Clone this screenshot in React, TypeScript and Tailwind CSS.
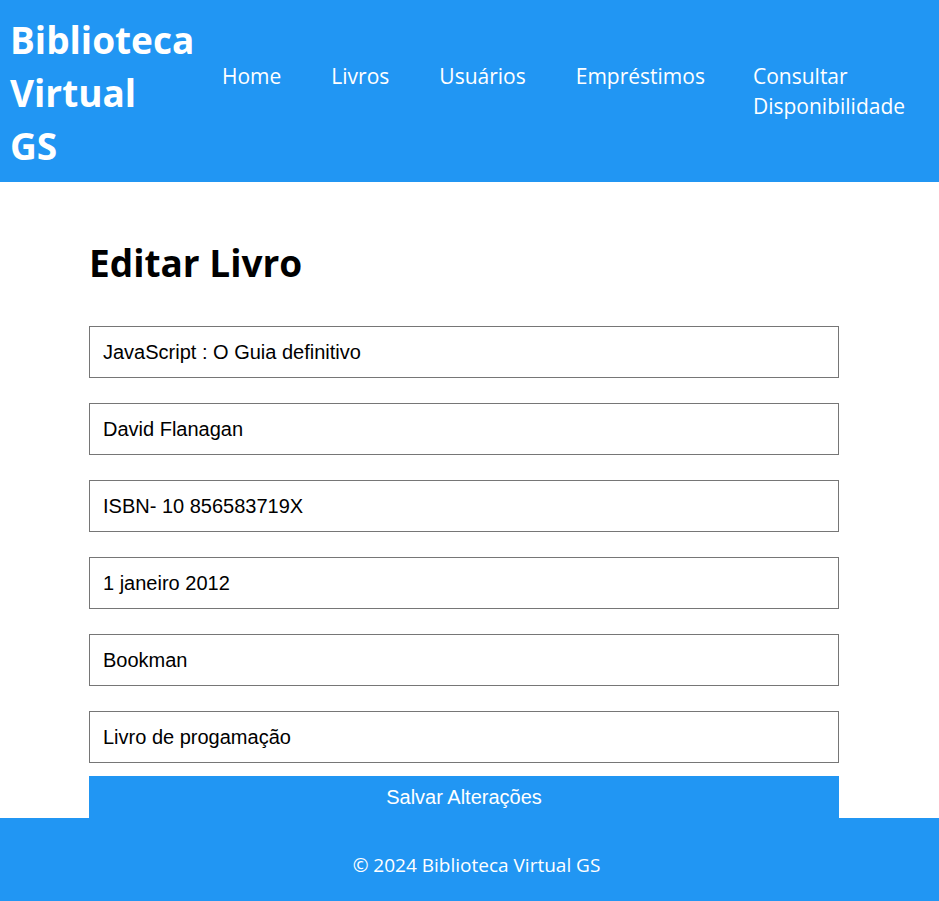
export default function App() {
  const fields = [
    "JavaScript : O Guia definitivo",
    "David Flanagan",
    "ISBN- 10 856583719X",
    "1 janeiro 2012",
    "Bookman",
    "Livro de progamação",
  ];

  const links = ["Home", "Livros", "Usuários", "Empréstimos"];

  return (
    <div className="min-h-[901px] flex flex-col bg-white font-['Open_Sans',sans-serif]">
      <header className="bg-[#2196f3] text-white flex items-center pl-[10px] pt-[13px] pb-[10px]">
        <h1 className="w-[186px] shrink-0 text-[37px] font-bold leading-[53px]">
          Biblioteca
          <br />
          Virtual
          <br />
          GS
        </h1>
        <nav className="ml-[26px] mb-[4px]">
          <ul className="flex gap-[50px] text-[21px] leading-[30px]">
            {links.map((l) => (
              <li key={l}>
                <a href="#">{l}</a>
              </li>
            ))}
            <li className="-ml-[2px]">
              <a href="#">
                Consultar
                <br />
                Disponibilidade
              </a>
            </li>
          </ul>
        </nav>
      </header>

      <main className="flex-1 pl-[89px]">
        <div className="w-[750px]">
          <h2 className="mt-[54px] mb-[37px] text-[37px] font-bold leading-[53px] text-black">
            Editar Livro
          </h2>
          <form className="flex flex-col" onSubmit={(e) => e.preventDefault()}>
            {fields.map((f) => (
              <input
                key={f}
                type="text"
                defaultValue={f}
                className="h-[52px] mb-[25px] last-of-type:mb-[13px] border border-[#767676] px-[13px] text-[20px] text-black font-['Liberation_Sans',Arial,sans-serif] outline-none"
              />
            ))}
            <button
              type="submit"
              className="h-[42px] bg-[#2196f3] text-white text-[20px] font-['Liberation_Sans',Arial,sans-serif]"
            >
              Salvar Alterações
            </button>
          </form>
        </div>
      </main>

      <footer className="bg-[#2196f3] text-white h-[83px] flex items-center justify-center pl-[14px] pt-[11px] text-[19px]">
        <p>© 2024 Biblioteca Virtual GS</p>
      </footer>
    </div>
  );
}
